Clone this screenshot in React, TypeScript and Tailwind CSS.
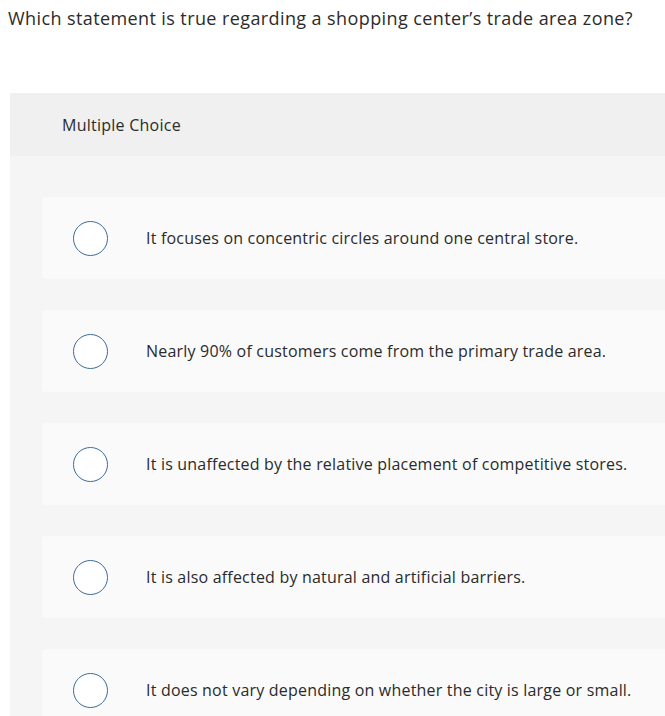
import React from 'react';

const options = [
  'It focuses on concentric circles around one central store.',
  'Nearly 90% of customers come from the primary trade area.',
  'It is unaffected by the relative placement of competitive stores.',
  'It is also affected by natural and artificial barriers.',
  'It does not vary depending on whether the city is large or small.',
];

const App: React.FC = () => {
  return (
    <div className="h-[716px] w-[665px] overflow-hidden bg-white text-[#2b2b2b] font-['Open_Sans',sans-serif]">
      {/* Question */}
      <p className="pl-2 pt-[6px] text-[18px] leading-6 tracking-[0.4px]">
        Which statement is true regarding a shopping center’s trade area zone?
      </p>

      {/* Answer panel */}
      <div className="ml-[10px] mt-[63px] w-[700px] rounded-tl bg-[#f5f5f5]">
        <div className="flex h-[63px] items-center bg-[#f0f0f0] pl-[52px] text-[16px] tracking-[0.25px]">
          Multiple Choice
        </div>

        <div className="flex flex-col gap-[31px] pl-8 pt-[41px]">
          {options.map((text) => (
            <div key={text} className="flex h-[82px] items-center rounded bg-[#fafafa]">
              <span className="ml-[31px] h-[35px] w-[35px] shrink-0 rounded-full border-[1.5px] border-[#3d6b99] bg-white" />
              <span className="ml-[38px] text-[16px] tracking-[0.2px]">{text}</span>
            </div>
          ))}
        </div>
      </div>
    </div>
  );
};

export default App;
